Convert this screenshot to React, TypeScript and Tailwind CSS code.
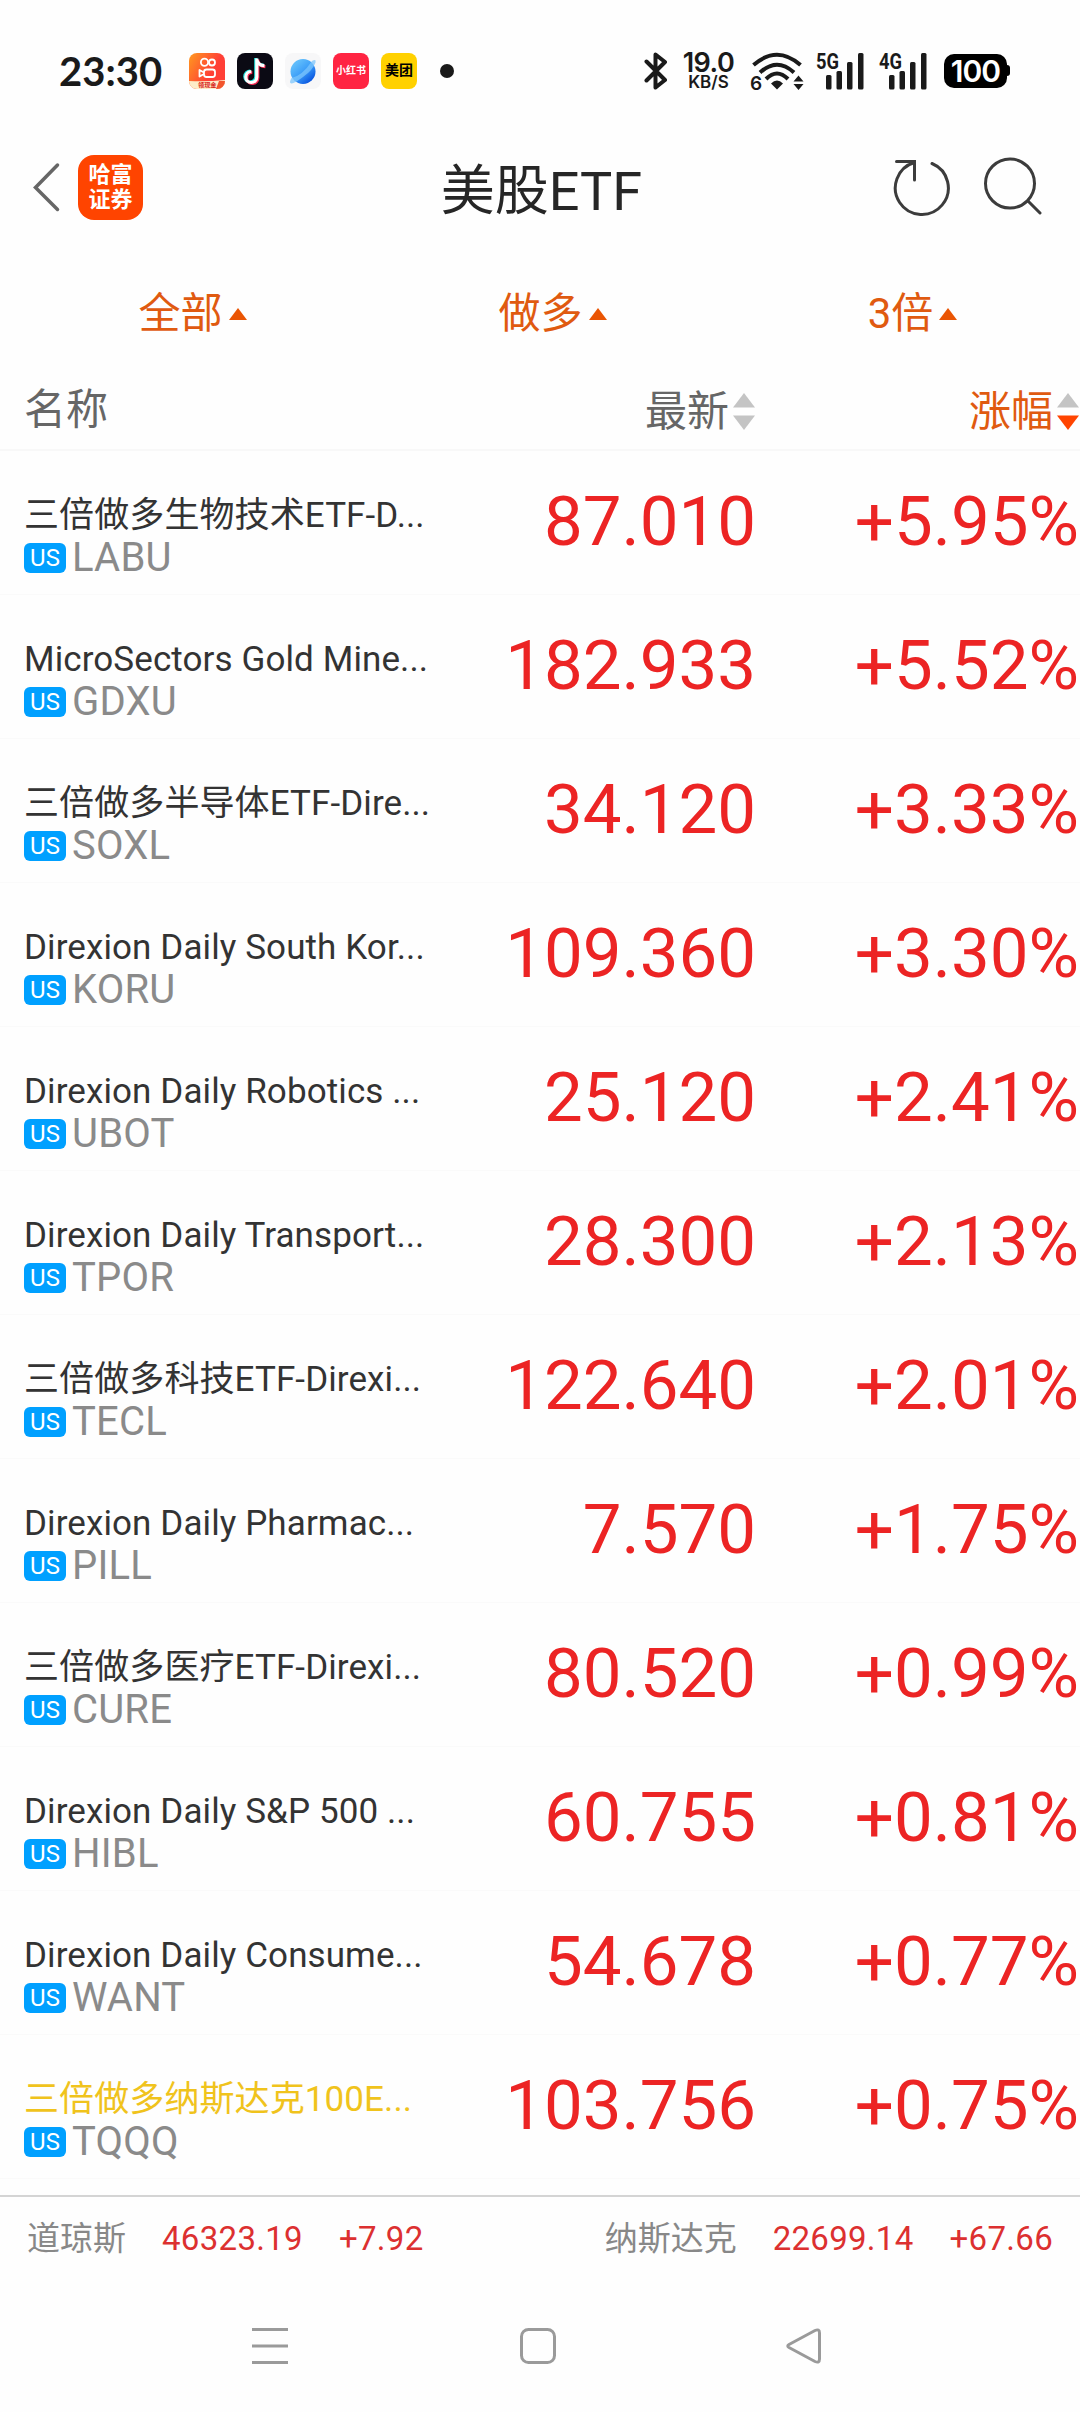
const filters = ["全部", "做多", "3倍"];

const funds = [
  { name: "三倍做多生物技术ETF-D...", code: "LABU", price: "87.010", change: "+5.95%" },
  { name: "MicroSectors Gold Mine...", code: "GDXU", price: "182.933", change: "+5.52%" },
  { name: "三倍做多半导体ETF-Dire...", code: "SOXL", price: "34.120", change: "+3.33%" },
  { name: "Direxion Daily South Kor...", code: "KORU", price: "109.360", change: "+3.30%" },
  { name: "Direxion Daily Robotics ...", code: "UBOT", price: "25.120", change: "+2.41%" },
  { name: "Direxion Daily Transport...", code: "TPOR", price: "28.300", change: "+2.13%" },
  { name: "三倍做多科技ETF-Direxi...", code: "TECL", price: "122.640", change: "+2.01%" },
  { name: "Direxion Daily Pharmac...", code: "PILL", price: "7.570", change: "+1.75%" },
  { name: "三倍做多医疗ETF-Direxi...", code: "CURE", price: "80.520", change: "+0.99%" },
  { name: "Direxion Daily S&P 500 ...", code: "HIBL", price: "60.755", change: "+0.81%" },
  { name: "Direxion Daily Consume...", code: "WANT", price: "54.678", change: "+0.77%" },
  { name: "三倍做多纳斯达克100E...", code: "TQQQ", price: "103.756", change: "+0.75%", watched: true },
];

const indices = [
  { name: "道琼斯", value: "46323.19", change: "+7.92" },
  { name: "纳斯达克", value: "22699.14", change: "+67.66" },
];

function AppIcons() {
  return (
    <div className="flex items-center gap-3">
      <svg width="36" height="36" viewBox="0 0 36 36">
        <defs>
          <linearGradient id="ks" x1="0" y1="0" x2="1" y2="0.6">
            <stop offset="0" stopColor="#ff9a1f" />
            <stop offset="0.7" stopColor="#ff3f36" />
          </linearGradient>
          <clipPath id="ksClip">
            <rect width="36" height="36" rx="8" />
          </clipPath>
        </defs>
        <g clipPath="url(#ksClip)">
          <rect width="36" height="36" fill="url(#ks)" />
          <g fill="none" stroke="#fff" strokeWidth="1.8">
            <circle cx="15.5" cy="9.2" r="3.6" />
            <circle cx="23" cy="9.5" r="3" />
            <rect x="15" y="16.5" width="11" height="7.500" rx="2.5" />
            <path d="M15 19.500l-4.500-2.500v6.500l4.500-2.500" strokeLinejoin="round" />
          </g>
          <path d="M0 28Q18 29 36 27V36H0z" fill="#fdecc8" />
          <path d="M30 28h6v8h-9z" fill="#f2552c" />
          <text x="9" y="34.400" fontSize="6.200" fontWeight="700" fill="#d8281c" fontFamily="Noto Sans CJK SC, sans-serif">领现金</text>
        </g>
      </svg>
      <svg width="36" height="36" viewBox="0 0 36 36">
        <rect width="36" height="36" rx="8" fill="#0b0a14" />
        <g fill="none" strokeWidth="3.2">
          <path d="M18.800 5v18.500a5.500 5.500 0 1 1-5.500-5.500M18.800 6c.7 4 3.500 6 7.600 6.200" stroke="#27e6e0" />
          <path d="M20.800 6.500v18.500a5.500 5.500 0 1 1-5.500-5.500M20.800 7.500c.7 4 3.500 6 7.600 6.200" stroke="#fb2c55" />
          <path d="M19.800 5.500v18.500a5.500 5.500 0 1 1-5.500-5.500M19.800 6.500c.7 4 3.500 6 7.600 6.200" stroke="#fff" />
        </g>
      </svg>
      <svg width="36" height="36" viewBox="0 0 36 36">
        <defs>
          <linearGradient id="planet" x1="0.2" y1="0.2" x2="0.8" y2="0.9">
            <stop offset="0" stopColor="#5fbcfb" />
            <stop offset="0.5" stopColor="#3a9cf8" />
            <stop offset="1" stopColor="#0a56e0" />
          </linearGradient>
        </defs>
        <rect width="36" height="36" rx="8" fill="#f7f7f8" />
        <circle cx="18" cy="18.500" r="12.500" fill="url(#planet)" />
        <path d="M27 8Q31.500 5.500 30.500 9.500Q28 17 18 24Q10 30 6.500 30.500Q3.500 30 6.500 25Q17 23 27 8z" fill="#7cc6fc" opacity="0.75" />
      </svg>
      <div className="flex size-9 items-center justify-center rounded-lg bg-[#ff2442] text-[10px] font-bold whitespace-nowrap text-white">
        小红书
      </div>
      <div className="flex size-9 items-center justify-center rounded-lg bg-[#ffd100] text-[14px] font-bold whitespace-nowrap text-black">
        美团
      </div>
    </div>
  );
}

function Signal({ label }: { label: string }) {
  return (
    <svg className="overflow-visible" width="50" height="38" viewBox="0 0 50 38" fill="#1a1a1a">
      <text x="0" y="16.500" fontSize="22" fontWeight="700" textLength="23" lengthAdjust="spacingAndGlyphs" fontFamily="Roboto, sans-serif">
        {label}
      </text>
      <rect x="10" y="23" width="5.500" height="14.500" rx="1.500" />
      <rect x="20.500" y="19" width="5.500" height="18.500" rx="1.500" />
      <rect x="31" y="10" width="5.500" height="27.500" rx="1.500" />
      <rect x="42" y="1" width="5.500" height="36.500" rx="1.500" />
    </svg>
  );
}

function StatusBar() {
  return (
    <div className="flex h-[141px] items-center pl-[59px] text-[#1a1a1a]">
      <span className="w-[130px] font-[Lato] text-[40px] leading-none font-bold">23:30</span>
      <AppIcons />
      <div className="ml-[23px] size-3.5 rounded-full bg-[#1a1a1a]" />
      <svg className="ml-[190px]" width="24" height="38" viewBox="0 0 24 38" fill="none" stroke="#1a1a1a" strokeWidth="4" strokeLinecap="round" strokeLinejoin="round">
        <path d="M2.500 9.500L21 28L11.500 35.500V2.500L21 10L2.500 28.500" />
      </svg>
      <div className="ml-[12px] flex h-[38px] w-[57px] flex-col items-center font-[Inter] font-semibold">
        <span className="text-[27px] leading-[22px] tracking-[-0.5px]">19.0</span>
        <span className="text-[17px] leading-[17px]">KB/S</span>
      </div>
      <svg className="ml-[13px] overflow-visible" width="54" height="38" viewBox="0 0 54 38" fill="none" stroke="#1a1a1a" strokeWidth="4">
        <path d="M3.500 13Q27 -7.500 50.500 13" />
        <path d="M10 20.500Q27 5 44 20.500" />
        <path d="M16 27Q27 16 38 27" />
        <path d="M27 37.500l-6-6q6-6 12 0z" fill="#1a1a1a" stroke="none" />
        <path d="M43.500 29.500l5-6 5 6zM43.500 32l5 6 5-6z" fill="#1a1a1a" stroke="none" />
        <text x="0" y="37.500" fontSize="19" fontWeight="600" fill="#1a1a1a" stroke="none" fontFamily="Inter, sans-serif">6</text>
      </svg>
      <div className="ml-3 flex gap-[13px]">
        <Signal label="5G" />
        <Signal label="4G" />
      </div>
      <div className="ml-[15px] flex h-[34px] w-[63px] items-center justify-center rounded-[10px] bg-black font-[Inter] text-[30px] leading-none font-semibold tracking-[-1px] text-white">
        100
      </div>
      <div className="h-[11px] w-[3px] rounded-r-sm bg-black" />
    </div>
  );
}

function TitleBar() {
  return (
    <header className="mt-px flex h-[90px] items-center justify-between pr-[38px] pl-[33px]">
      <div className="flex w-[158px] items-center">
        <svg width="27" height="50" viewBox="0 0 27 50" fill="none" stroke="#666" strokeWidth="3.500" strokeLinecap="round">
          <path d="M24.500 3L2.500 25.500L24.500 47.500" />
        </svg>
        <div className="ml-[18px] flex size-[65px] items-center justify-center rounded-2xl bg-[#ff4400] text-center text-[22px] leading-[25px] font-bold text-white">
          哈富
          <br />
          证券
        </div>
      </div>
      <h1 className="pt-[9px] text-[54px] leading-none text-[#262626]">美股ETF</h1>
      <svg width="150" height="62" viewBox="891 157 150 62" fill="none" stroke="#3c3c3c" strokeWidth="3" strokeLinecap="round">
        <path d="M931 164.500A26.500 26.500 0 1 1 913.500 163.500" />
        <path d="M895.500 162.500H913.500V181" />
        <circle cx="1009" cy="184.500" r="24.500" />
        <path d="M1027 202L1039 214" />
      </svg>
    </header>
  );
}

function SortArrows({ active }: { active?: boolean }) {
  return (
    <svg width="22" height="37" viewBox="0 0 22 37">
      <path d="M11 0L22 14.500H0z" fill="#c4c4c4" />
      <path d="M11 37L22 22.500H0z" fill={active ? "#ff4400" : "#c4c4c4"} />
    </svg>
  );
}

function FundRow({ fund }: { fund: (typeof funds)[number] }) {
  return (
    <li className="flex h-36 items-center border-b border-[#fafafa]">
      <div className="w-[454px] pl-6">
        <div className={`pt-[30px] text-[35px] leading-[40px] tracking-[0.1px] whitespace-nowrap ${fund.watched ? "text-[#f0c31c]" : "text-[#333]"}`}>
          {fund.name}
        </div>
        <div className="flex items-center gap-[6px]">
          <span className="flex h-[30px] w-[42px] items-center justify-center rounded-md bg-[#00a0ff] text-[24px] leading-none text-white">
            US
          </span>
          <span className="text-[40px] leading-[44px] tracking-[0.2px] text-[#8a8a8a]">{fund.code}</span>
        </div>
      </div>
      <span className="w-[302px] pb-[3px] text-right text-[69px] leading-none text-[#ec2424]">{fund.price}</span>
      <span className="w-[324px] pr-px pb-[3px] text-right text-[69px] leading-none text-[#ec2424]">{fund.change}</span>
    </li>
  );
}

function App() {
  return (
    <main className="flex h-[2412px] w-[1080px] flex-col overflow-hidden bg-[#fefefe] font-[Roboto,'Noto_Sans_CJK_SC',sans-serif]">
      <StatusBar />
      <TitleBar />

      <nav className="mt-[49px] grid h-[66px] grid-cols-3 text-[42px] text-[#e05a10]">
        {filters.map((filter) => (
          <div key={filter} className="flex items-center justify-center gap-[6px] pl-[25px] leading-none">
            {filter}
            <svg width="18" height="12" viewBox="0 0 18 12">
              <path d="M9 0L18 12H0z" fill="#ea5504" />
            </svg>
          </div>
        ))}
      </nav>

      <div className="mt-[31px] flex h-[73px] items-center border-b-2 border-[#f8f8f8] pb-1 text-[42px] leading-none text-[#666]">
        <span className="w-[454px] pb-[3px] pl-6">名称</span>
        <span className="flex w-[301px] items-center justify-end gap-1">
          最新
          <SortArrows />
        </span>
        <span className="flex w-[324px] items-center justify-end gap-1 text-[#e05a10]">
          涨幅
          <SortArrows active />
        </span>
      </div>

      <ul>
        {funds.map((fund) => (
          <FundRow key={fund.code} fund={fund} />
        ))}
      </ul>

      <footer className="mt-[16px] flex h-[90px] items-center justify-between border-t-2 border-[#d4d4d4] px-[27px] pb-[6px] text-[33px] leading-none">
        {indices.map((index) => (
          <div key={index.name} className="flex gap-[36px] text-[#dc3030]">
            <span className="text-[#888]">{index.name}</span>
            <span className="tracking-[0.3px]">{index.value}</span>
            <span className="tracking-[0.3px]">{index.change}</span>
          </div>
        ))}
      </footer>

      <div className="mt-[42px] flex pl-[252px]">
        <svg width="36" height="38" viewBox="0 0 36 38" stroke="#9a9a9a" strokeWidth="3">
          <path d="M0 2.500H36M0 19H36M0 35.500H36" />
        </svg>
        <svg className="ml-[232px]" width="36" height="38" viewBox="0 0 36 38" fill="none" stroke="#9a9a9a" strokeWidth="3">
          <rect x="1.500" y="2.500" width="33" height="33" rx="7" />
        </svg>
        <svg className="ml-[230px]" width="36" height="38" viewBox="0 0 36 38" fill="none" stroke="#9a9a9a" strokeWidth="3" strokeLinejoin="round">
          <path d="M3 17.500L29 3.500Q33.500 1.500 33.500 6V32Q33.500 36.500 29 34.500L3 20.500Q0.500 19 3 17.500z" />
        </svg>
      </div>
    </main>
  );
}

export default App;
